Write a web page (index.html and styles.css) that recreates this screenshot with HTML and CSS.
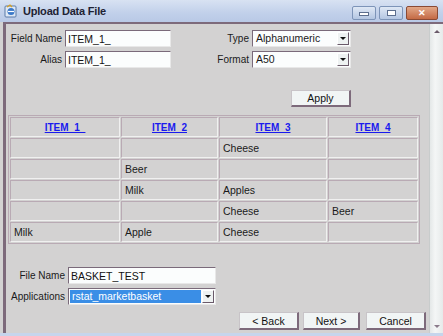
FILE: index.html
```html
<!DOCTYPE html>
<html lang="en">
<head>
    <meta charset="UTF-8">
    <title>Upload Data File</title>
    <link rel="stylesheet" href="styles.css">
</head>
<body>
    <div class="window">
        <div class="titlebar">
            <svg class="app-icon" width="14" height="14" viewBox="0 0 14 14">
                <rect x="1" y="2" width="11" height="11" rx="1" fill="#dfe8f4" stroke="#5a7aa8"/>
                <circle cx="7" cy="7.5" r="3.5" fill="#3b78c8"/>
                <path d="M4 7.5h6" stroke="#fff" stroke-width="1.2"/>
                <path d="M3 3l3-2 2 2" fill="none" stroke="#d8a020" stroke-width="1.2"/>
            </svg>
            <span class="title">Upload Data File</span>
            <div class="win-btns">
                <span class="win-btn"><i class="min"></i></span>
                <span class="win-btn"><i class="max"></i></span>
                <span class="win-btn close">&#x2715;</span>
            </div>
        </div>
        <div class="frame">
            <div class="content">
                <div class="fields">
                    <div class="field-group">
                        <div class="row">
                            <label class="lbl lbl-left">Field Name</label>
                            <input class="txt" type="text" value="ITEM_1_">
                        </div>
                        <div class="row">
                            <label class="lbl lbl-left">Alias</label>
                            <input class="txt" type="text" value="ITEM_1_">
                        </div>
                    </div>
                    <div class="field-group">
                        <div class="row">
                            <label class="lbl lbl-right">Type</label>
                            <div class="select wide"><span class="sel-val">Alphanumeric</span><span class="arrow"></span></div>
                        </div>
                        <div class="row">
                            <label class="lbl lbl-right">Format</label>
                            <div class="select wide"><span class="sel-val">A50</span><span class="arrow"></span></div>
                        </div>
                    </div>
                </div>

                <div class="apply-row">
                    <span class="btn apply">Apply</span>
                </div>

                <table class="grid">
                    <tr>
                        <th><a href="#">ITEM_1_</a></th>
                        <th><a href="#">ITEM_2</a></th>
                        <th><a href="#">ITEM_3</a></th>
                        <th><a href="#">ITEM_4</a></th>
                    </tr>
                    <tr><td></td><td></td><td>Cheese</td><td></td></tr>
                    <tr><td></td><td>Beer</td><td></td><td></td></tr>
                    <tr><td></td><td>Milk</td><td>Apples</td><td></td></tr>
                    <tr><td></td><td></td><td>Cheese</td><td>Beer</td></tr>
                    <tr><td>Milk</td><td>Apple</td><td>Cheese</td><td></td></tr>
                </table>

                <div class="file-fields">
                    <div class="row">
                        <label class="lbl lbl-file">File Name</label>
                        <input class="txt file" type="text" value="BASKET_TEST">
                    </div>
                    <div class="row">
                        <label class="lbl lbl-file">Applications</label>
                        <div class="select file"><span class="sel-val picked">rstat_marketbasket</span><span class="arrow"></span></div>
                    </div>
                </div>

                <div class="nav-row">
                    <span class="btn nav">&lt; Back</span>
                    <span class="btn nav next">Next &gt;</span>
                    <span class="btn nav">Cancel</span>
                </div>
            </div>
            <div class="scrollbar">
                <span class="up"></span>
                <span class="down"></span>
            </div>
        </div>
        <div class="bottom-edge"></div>
    </div>
</body>
</html>
```

FILE: styles.css
```css
/* Window chrome */
body {
  margin: 0;
  font-family: "Liberation Sans", Arial, sans-serif;
  font-size: 10px;
  color: #1a1a1a;
  background: #d3d2d2;
}

.window {
  width: 443px;
  height: 336px;
  display: flex;
  flex-direction: column;
  overflow: hidden;
}

.titlebar {
  height: 22px;
  flex-shrink: 0;
  display: flex;
  align-items: center;
  padding: 0 5px 0 4px;
  background: linear-gradient(to bottom, #d8e2f2, #c1d0ea 60%, #b9c9e6);
  box-sizing: border-box;
}

.app-icon {
  margin-right: 5px;
}

.title {
  font-weight: bold;
  font-size: 11px;
  color: #1e2233;
  letter-spacing: -0.2px;
}

.win-btns {
  margin-left: auto;
  display: flex;
  gap: 3px;
  margin-top: 3px;
}

.win-btn {
  width: 22px;
  height: 12px;
  border: 1px solid #7d94b8;
  border-radius: 2px;
  background: linear-gradient(to bottom, #dfe8f5, #b4c6e2);
  display: flex;
  align-items: center;
  justify-content: center;
}

.win-btn .min {
  width: 8px;
  height: 2px;
  background: #fff;
  border: 1px solid #5c6e8e;
  margin-top: 3px;
}

.win-btn .max {
  width: 7px;
  height: 4px;
  border: 1px solid #5c6e8e;
  background: #fff;
}

.win-btn.close {
  width: 30px;
  background: linear-gradient(to bottom, #e2a888, #c46a45);
  border-color: #8a4a34;
  color: #fff;
  font-size: 9px;
  font-weight: bold;
}

.frame {
  flex: 1;
  display: flex;
  border-top: 2px solid #7d6a7b;
  margin-left: 3px;
  min-height: 0;
}

.content {
  flex: 1;
  border-left: 3px solid #7d6a7b;
  background: #d3d2d2;
  padding: 6px 0 0 2px;
}

.scrollbar {
  width: 13px;
  background: linear-gradient(to right, #e4e8e8, #f4f6f6 40%, #e6eaea);
  border-left: 1px solid #c8cccc;
  position: relative;
}

.scrollbar .up,
.scrollbar .down {
  position: absolute;
  left: 4px;
  width: 0;
  height: 0;
  border-left: 3px solid transparent;
  border-right: 3px solid transparent;
}

.scrollbar .up {
  top: 6px;
  border-bottom: 3px solid #6a5a6a;
}

.scrollbar .down {
  bottom: 5px;
  border-top: 3px solid #8a7a8a;
}

.bottom-edge {
  height: 3px;
  flex-shrink: 0;
  background: #c6d5ec;
}

/* Form fields */
.fields {
  display: flex;
}

.field-group {
  display: flex;
  flex-direction: column;
  gap: 4px;
}

.row {
  display: flex;
  align-items: center;
  height: 17px;
}

.lbl {
  flex-shrink: 0;
  white-space: nowrap;
  text-align: right;
  padding-right: 3px;
  box-sizing: border-box;
}

.lbl-left {
  width: 57px;
}

.lbl-right {
  width: 81px;
}

.lbl-file {
  width: 60px;
}

.txt {
  flex-shrink: 0;
  width: 106px;
  height: 17px;
  box-sizing: border-box;
  border: 1px solid;
  border-color: #7a6a7a #e8e8e8 #e8e8e8 #7a6a7a;
  background: #fbfdfd;
  font: inherit;
  font-size: 10.5px;
  padding: 0 2px;
  margin: 0;
  color: #111;
}

.txt.file {
  width: 148px;
}

.select {
  flex-shrink: 0;
  height: 17px;
  box-sizing: border-box;
  border: 1px solid;
  border-color: #7a6a7a #e8e8e8 #e8e8e8 #7a6a7a;
  background: #fbfdfd;
  display: flex;
  align-items: center;
  padding-left: 1px;
  font-size: 10.5px;
}

.select.wide {
  width: 99px;
}

.select.file {
  width: 148px;
}

.sel-val {
  flex: 1;
  padding-left: 2px;
  line-height: 13px;
  height: 13px;
}

.sel-val.picked {
  background: #3a8ee6;
  color: #fff;
}

.arrow {
  width: 12px;
  height: 13px;
  margin: 0 1px;
  box-sizing: border-box;
  border: 1px solid;
  border-color: #fff #6a5a6a #6a5a6a #fff;
  background: #eef2f2;
  position: relative;
}

.arrow::after {
  content: "";
  position: absolute;
  left: 2px;
  top: 4px;
  border-left: 3px solid transparent;
  border-right: 3px solid transparent;
  border-top: 3px solid #111;
}

/* Buttons */
.btn {
  display: inline-flex;
  align-items: center;
  justify-content: center;
  height: 17px;
  box-sizing: border-box;
  background: #f1f5f5;
  border: 1px solid;
  border-color: #c8c4c8 #7d6a7b #7d6a7b #c8c4c8;
  border-width: 1px 2px 2px 1px;
  color: #111;
  font-size: 10.5px;
}

.apply-row {
  display: flex;
  justify-content: flex-end;
  padding: 22px 78px 0 0;
}

.apply {
  width: 60px;
}

/* Table */
.grid {
  margin-top: 8px;
  width: 412px;
  border-collapse: separate;
  border-spacing: 1px;
  border: 1px solid #b9aab4;
  background: #d3d2d2;
}

.grid th,
.grid td {
  height: 20px;
  padding: 0 3px;
  box-sizing: border-box;
  border: 1px solid;
  border-color: #b9aab4 #f0f0f0 #f0f0f0 #b9aab4;
  text-align: left;
  font-weight: normal;
  font-size: 10.5px;
}

.grid th {
  text-align: center;
}

.grid th a {
  color: #1a1aee;
  font-weight: bold;
  font-size: 10px;
}

.grid tr > :nth-child(1) { width: 110px; }
.grid tr > :nth-child(2) { width: 97px; }
.grid tr > :nth-child(3) { width: 108px; }

/* Bottom area */
.file-fields {
  display: flex;
  flex-direction: column;
  gap: 4px;
  margin-top: 23px;
}

.nav-row {
  display: flex;
  gap: 4px;
  padding: 7px 0 0 231px;
}

.nav {
  width: 60px;
  height: 18px;
}

.nav.next {
  width: 57px;
  margin-right: 2px;
}
```
